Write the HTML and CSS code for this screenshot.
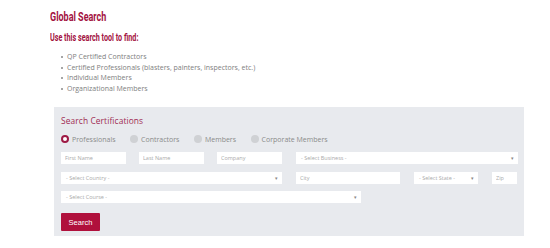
FILE: index.html
```html
<!DOCTYPE html>
<html lang="en">
<head>
    <meta charset="UTF-8">
    <meta name="viewport" content="width=device-width, initial-scale=1.0">
    <title>Global Search</title>
    <link rel="stylesheet" href="styles.css">
</head>
<body>
    <div class="page">
        <h1><span>Global Search</span></h1>
        <h2><span>Use this search tool to find:</span></h2>
        <ul class="find-list">
            <li>QP Certified Contractors</li>
            <li>Certified Professionals (blasters, painters, inspectors, etc.)</li>
            <li>Individual Members</li>
            <li>Organizational Members</li>
        </ul>

        <form class="search-box">
            <h3>Search Certifications</h3>
            <div class="radios">
                <label class="radio checked"><span class="dot"></span>Professionals</label>
                <label class="radio"><span class="dot"></span>Contractors</label>
                <label class="radio"><span class="dot"></span>Members</label>
                <label class="radio"><span class="dot"></span>Corporate Members</label>
            </div>
            <div class="row first">
                <input type="text" class="w-name" placeholder="First Name">
                <input type="text" class="w-name" placeholder="Last Name">
                <input type="text" class="w-name" placeholder="Company">
                <div class="select w-business">- Select Business -</div>
            </div>
            <div class="row wide-gap">
                <div class="select w-country">- Select Country -</div>
                <input type="text" class="w-city" placeholder="City">
                <div class="select w-state">- Select State -</div>
                <input type="text" class="w-zip" placeholder="Zip">
            </div>
            <div class="row">
                <div class="select w-course">- Select Course -</div>
            </div>
            <button type="button" class="search-btn">Search</button>
        </form>
    </div>
</body>
</html>
```

FILE: styles.css
```css
body {
    margin: 0;
    background-color: #fff;
    font-family: "Open Sans", sans-serif;
}
.page {
    padding: 10px 26px 0 50px;
}
h1, h2 {
    margin: 0;
    font-family: Roboto, sans-serif;
    font-weight: bold;
    color: #a3123f;
}
h1 span, h2 span {
    display: inline-block;
    transform-origin: left center;
    white-space: nowrap;
}
h1 {
    font-size: 12.5px;
    line-height: 14px;
}
h1 span {
    transform: scaleX(0.72);
}
h2 {
    margin-top: 9px;
    font-size: 10px;
    line-height: 10px;
}
h2 span {
    transform: scaleX(0.72);
}
.find-list {
    margin: 9px 0 0;
    padding-left: 17px;
    list-style: none;
    font-size: 7px;
    line-height: 10.5px;
    color: #7e7e7e;
}
.find-list li::before {
    content: "";
    display: inline-block;
    width: 2px;
    height: 2px;
    margin: 0 4px 1px -6px;
    border-radius: 50%;
    background-color: #888;
}
.search-box {
    margin: 13px 0 0 4px;
    width: 470px;
    height: 129px;
    box-sizing: border-box;
    padding: 8px 6px 0 7px;
    background-color: #e8eaee;
}
h3 {
    margin: 0;
    font-size: 8.4px;
    font-weight: normal;
    color: #a02a52;
    letter-spacing: 0.1px;
    line-height: 12px;
}
.radios {
    display: flex;
    gap: 14.5px;
    margin-top: 6px;
    height: 12px;
    align-items: center;
}
.radio {
    display: flex;
    align-items: center;
    gap: 3px;
    font-size: 7px;
    color: #8a8a8a;
}
.dot {
    width: 8px;
    height: 8px;
    border-radius: 50%;
    background-color: #cfd1d4;
    box-sizing: border-box;
}
.radio.checked .dot {
    background-color: #fff;
    border: 2.5px solid #9e1a45;
}
.row {
    display: flex;
    gap: 13px;
    margin-top: 7px;
}
.row.first {
    margin-top: 7px;
}
.row.wide-gap {
    gap: 14px;
    margin-top: 8px;
}
input, .select {
    height: 12px;
    box-sizing: border-box;
    border: none;
    background-color: #fff;
    padding: 0 4px;
    font-family: "Open Sans", sans-serif;
    font-size: 5.5px;
    color: #aaa;
    outline: none;
}
input::placeholder {
    color: #aaa;
}
.select {
    position: relative;
    line-height: 12px;
    padding-left: 5px;
}
.select::after {
    content: "\25BE";
    position: absolute;
    right: 4px;
    top: 0;
    font-size: 5px;
    color: #888;
}
.w-name { width: 65px; }
.w-business { width: 222px; margin-left: 1px; }
.w-country { width: 221px; }
.w-city { width: 104px; }
.w-state { width: 64px; }
.w-zip { width: 25px; }
.w-course { width: 300px; }
.search-btn {
    display: block;
    margin-top: 10px;
    width: 39px;
    height: 18px;
    border: none;
    border-radius: 1px;
    padding: 0;
    background-color: #b0103c;
    color: #fff;
    font-family: "Liberation Sans", Arial, sans-serif;
    font-size: 7.5px;
    cursor: pointer;
}
```
